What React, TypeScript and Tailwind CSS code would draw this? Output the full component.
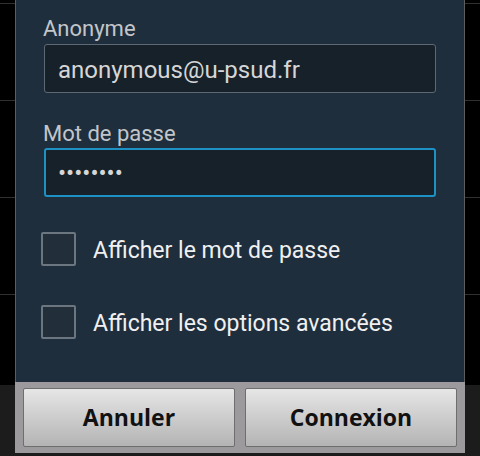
import React from "react";

function BgStrip() {
  return (
    <div className="flex flex-col h-full">
      <div className="h-[3px] bg-black" />
      <div className="h-[1px] bg-[#303030]" />
      <div className="h-[96px] bg-black" />
      <div className="h-[1px] bg-[#303030]" />
      <div className="h-[96px] bg-black" />
      <div className="h-[1px] bg-[#303030]" />
      <div className="h-[96px] bg-black" />
      <div className="h-[1px] bg-[#303030]" />
      <div className="h-[90px] bg-black" />
      <div className="flex-1 bg-[#1c1c1c]" />
    </div>
  );
}

function Checkbox({ label, className }: { label: string; className: string }) {
  return (
    <div className={"flex items-center h-[34px] " + className}>
      <div className="w-[35px] h-[34px] border-2 border-[#6b7680] bg-[#222f3b] rounded-[2px] ml-[-3px]" />
      <span className="ml-[17px] mt-[4px] text-[23px] leading-[26px] text-[#f0f0f0]">{label}</span>
    </div>
  );
}

export default function App() {
  return (
    <div
      className="relative w-[480px] h-[456px] bg-black overflow-hidden"
      style={{ fontFamily: "Roboto, 'Noto Sans', sans-serif" }}
    >
      <BgStrip />
      <div className="absolute left-[15px] top-0 w-[450px] h-[453px] flex flex-col">
        <div className="flex-1 flex flex-col bg-[#1f2e3d] border-x border-[#5e5e5e] px-[28px] pt-[16px]">
          <div className="text-[22px] leading-[26px] text-[#c2c6ca] ml-[-1px]">Anonyme</div>
          <div className="mt-[2px] h-[49px] border border-[#5d6a76] rounded-[3px] bg-[#17212a] flex items-center pl-[13px] pt-[2px]">
            <span className="text-[24px] leading-[28px] text-[#d6d6d6]">anonymous@u-psud.fr</span>
          </div>
          <div className="mt-[28px] text-[22px] leading-[26px] text-[#c2c6ca] ml-[-1px]">Mot de passe</div>
          <div className="mt-[1px] h-[49px] border-2 border-[#1d90c4] rounded-[3px] bg-[#17212a] flex items-center pl-[12px] pt-[1px]">
            <span className="text-[24px] leading-[28px] text-[#d6d6d6]">••••••••</span>
          </div>
          <Checkbox label="Afficher le mot de passe" className="mt-[35px]" />
          <Checkbox label="Afficher les options avancées" className="mt-[39px]" />
        </div>
        <div className="h-[71px] bg-[#9c9a9c] flex gap-[10px] px-[8px] py-[6px]">
          <button
            className="flex-1 border border-[#6e6e6e] rounded-[2px] bg-gradient-to-b from-[#e6e6e6] to-[#b4b4b4] text-[23px] font-bold text-[#111]"
            style={{ fontFamily: "'Open Sans', 'DejaVu Sans', sans-serif" }}
          >
            Annuler
          </button>
          <button
            className="flex-1 border border-[#6e6e6e] rounded-[2px] bg-gradient-to-b from-[#e6e6e6] to-[#b4b4b4] text-[23px] font-bold text-[#111]"
            style={{ fontFamily: "'Open Sans', 'DejaVu Sans', sans-serif" }}
          >
            Connexion
          </button>
        </div>
      </div>
    </div>
  );
}
